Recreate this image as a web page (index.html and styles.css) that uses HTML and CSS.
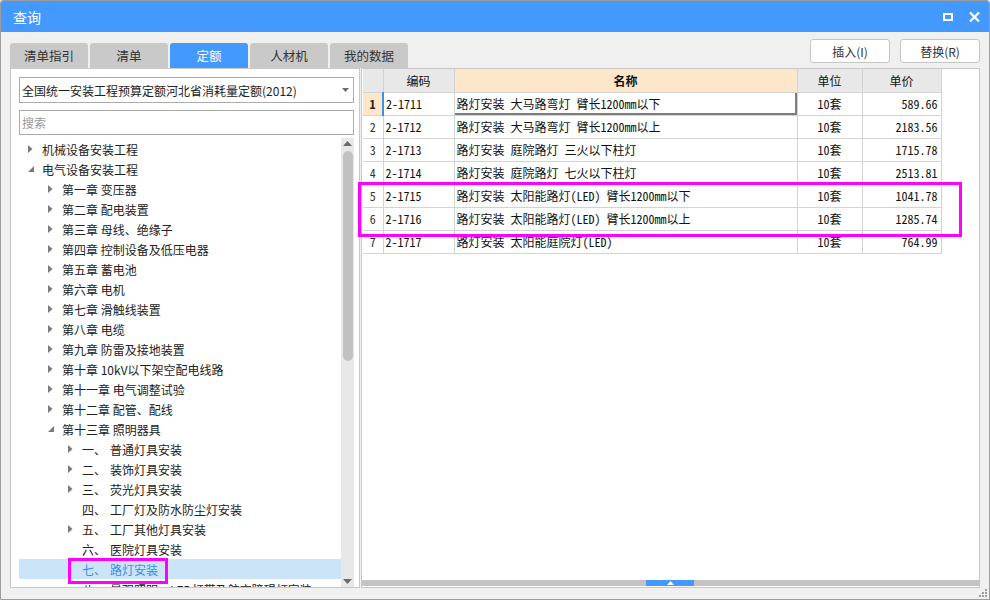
FILE: index.html
```html
<!DOCTYPE html>
<html lang="zh-CN">
<head>
<meta charset="utf-8">
<title>查询</title>
<link rel="stylesheet" href="styles.css">
</head>
<body>
<div class="window">
  <div class="titlebar">
    <span class="title">查询</span>
    <div class="wctl">
      <svg class="ico-max" width="10" height="8" viewBox="0 0 10 8"><rect x="1" y="1" width="8" height="6" fill="none" stroke="#fff" stroke-width="2"/></svg>
      <svg class="ico-close" width="11" height="10" viewBox="0 0 11 10"><path d="M1 0.5L10 9.5M10 0.5L1 9.5" stroke="#fff" stroke-width="2.2"/></svg>
    </div>
  </div>

  <div class="toolbar">
    <div class="tabs">
      <div class="tab">清单指引</div>
      <div class="tab">清单</div>
      <div class="tab active">定额</div>
      <div class="tab">人材机</div>
      <div class="tab">我的数据</div>
    </div>
    <div class="actions">
      <div class="btn">插入(I)</div>
      <div class="btn">替换(R)</div>
    </div>
  </div>

  <div class="panels">
    <div class="left">
      <div class="combo">
        <span>全国统一安装工程预算定额河北省消耗量定额(2012)</span>
        <svg class="combo-arrow" width="7" height="4" viewBox="0 0 7 4"><path d="M0 0H7L3.5 4Z" fill="#6d6d6d"/></svg>
      </div>
      <div class="search">搜索</div>
      <div class="treewrap">
        <div class="tree">
          <div class="node l0"><span class="tw"><svg width="5" height="8" viewBox="0 0 5 8"><path d="M0 0L4.5 4L0 8Z"/></svg></span>机械设备安装工程</div>
          <div class="node l0"><span class="tw"><svg width="6" height="6" viewBox="0 0 6 6"><path d="M6 0V6H0Z"/></svg></span>电气设备安装工程</div>
          <div class="node l1"><span class="tw"><svg width="5" height="8" viewBox="0 0 5 8"><path d="M0 0L4.5 4L0 8Z"/></svg></span>第一章 变压器</div>
          <div class="node l1"><span class="tw"><svg width="5" height="8" viewBox="0 0 5 8"><path d="M0 0L4.5 4L0 8Z"/></svg></span>第二章 配电装置</div>
          <div class="node l1"><span class="tw"><svg width="5" height="8" viewBox="0 0 5 8"><path d="M0 0L4.5 4L0 8Z"/></svg></span>第三章 母线、绝缘子</div>
          <div class="node l1"><span class="tw"><svg width="5" height="8" viewBox="0 0 5 8"><path d="M0 0L4.5 4L0 8Z"/></svg></span>第四章 控制设备及低压电器</div>
          <div class="node l1"><span class="tw"><svg width="5" height="8" viewBox="0 0 5 8"><path d="M0 0L4.5 4L0 8Z"/></svg></span>第五章 蓄电池</div>
          <div class="node l1"><span class="tw"><svg width="5" height="8" viewBox="0 0 5 8"><path d="M0 0L4.5 4L0 8Z"/></svg></span>第六章 电机</div>
          <div class="node l1"><span class="tw"><svg width="5" height="8" viewBox="0 0 5 8"><path d="M0 0L4.5 4L0 8Z"/></svg></span>第七章 滑触线装置</div>
          <div class="node l1"><span class="tw"><svg width="5" height="8" viewBox="0 0 5 8"><path d="M0 0L4.5 4L0 8Z"/></svg></span>第八章 电缆</div>
          <div class="node l1"><span class="tw"><svg width="5" height="8" viewBox="0 0 5 8"><path d="M0 0L4.5 4L0 8Z"/></svg></span>第九章 防雷及接地装置</div>
          <div class="node l1"><span class="tw"><svg width="5" height="8" viewBox="0 0 5 8"><path d="M0 0L4.5 4L0 8Z"/></svg></span>第十章 10kV以下架空配电线路</div>
          <div class="node l1"><span class="tw"><svg width="5" height="8" viewBox="0 0 5 8"><path d="M0 0L4.5 4L0 8Z"/></svg></span>第十一章 电气调整试验</div>
          <div class="node l1"><span class="tw"><svg width="5" height="8" viewBox="0 0 5 8"><path d="M0 0L4.5 4L0 8Z"/></svg></span>第十二章 配管、配线</div>
          <div class="node l1"><span class="tw"><svg width="6" height="6" viewBox="0 0 6 6"><path d="M6 0V6H0Z"/></svg></span>第十三章 照明器具</div>
          <div class="node l2"><span class="tw"><svg width="5" height="8" viewBox="0 0 5 8"><path d="M0 0L4.5 4L0 8Z"/></svg></span><span class="ord">一、</span>普通灯具安装</div>
          <div class="node l2"><span class="tw"><svg width="5" height="8" viewBox="0 0 5 8"><path d="M0 0L4.5 4L0 8Z"/></svg></span><span class="ord">二、</span>装饰灯具安装</div>
          <div class="node l2"><span class="tw"><svg width="5" height="8" viewBox="0 0 5 8"><path d="M0 0L4.5 4L0 8Z"/></svg></span><span class="ord">三、</span>荧光灯具安装</div>
          <div class="node l2"><span class="tw"></span><span class="ord">四、</span>工厂灯及防水防尘灯安装</div>
          <div class="node l2"><span class="tw"><svg width="5" height="8" viewBox="0 0 5 8"><path d="M0 0L4.5 4L0 8Z"/></svg></span><span class="ord">五、</span>工厂其他灯具安装</div>
          <div class="node l2"><span class="tw"></span><span class="ord">六、</span>医院灯具安装</div>
          <div class="node l2 selected"><span class="tw"></span><span class="ord">七、</span>路灯安装</div>
          <div class="node l2"><span class="tw"></span><span class="ord">八、</span>景观照明、LED灯带及航空障碍灯安装</div>
        </div>
        <div class="vscroll">
          <svg width="9" height="5" viewBox="0 0 9 5"><path d="M0 5L4.5 0L9 5Z" fill="#6a6a6a"/></svg>
          <div class="vthumb"></div>
          <div class="vspace"></div>
          <svg width="9" height="5" viewBox="0 0 9 5"><path d="M0 0H9L4.5 5Z" fill="#6a6a6a"/></svg>
        </div>
      </div>
    </div>

    <div class="right">
      <div class="gridarea">
        <table class="grid">
          <colgroup>
            <col class="c-no"><col class="c-code"><col class="c-name"><col class="c-unit"><col class="c-price">
          </colgroup>
          <thead>
            <tr><th></th><th>编码</th><th class="hl">名称</th><th>单位</th><th>单价</th></tr>
          </thead>
          <tbody>
            <tr class="cur"><td class="no">1</td><td class="code">2-1711</td><td class="name">路灯安装 大马路弯灯 臂长1200mm以下</td><td class="unit">10套</td><td class="price">589.66</td></tr>
            <tr><td class="no">2</td><td class="code">2-1712</td><td class="name">路灯安装 大马路弯灯 臂长1200mm以上</td><td class="unit">10套</td><td class="price">2183.56</td></tr>
            <tr><td class="no">3</td><td class="code">2-1713</td><td class="name">路灯安装 庭院路灯 三火以下柱灯</td><td class="unit">10套</td><td class="price">1715.78</td></tr>
            <tr><td class="no">4</td><td class="code">2-1714</td><td class="name">路灯安装 庭院路灯 七火以下柱灯</td><td class="unit">10套</td><td class="price">2513.81</td></tr>
            <tr><td class="no">5</td><td class="code">2-1715</td><td class="name">路灯安装 太阳能路灯(LED) 臂长1200mm以下</td><td class="unit">10套</td><td class="price">1041.78</td></tr>
            <tr><td class="no">6</td><td class="code">2-1716</td><td class="name">路灯安装 太阳能路灯(LED) 臂长1200mm以上</td><td class="unit">10套</td><td class="price">1285.74</td></tr>
            <tr><td class="no">7</td><td class="code">2-1717</td><td class="name">路灯安装 太阳能庭院灯(LED)</td><td class="unit">10套</td><td class="price">764.99</td></tr>
          </tbody>
        </table>
      </div>
      <div class="hscroll">
        <div class="hthumb"><svg width="7" height="4" viewBox="0 0 7 4"><path d="M0 4L3.5 0L7 4Z" fill="#fff"/></svg></div>
      </div>
    </div>
  </div>

  <div class="mark mark-tree"></div>
  <div class="mark mark-grid"></div>
  <svg class="grip" width="8" height="8" viewBox="0 0 8 8"><g fill="#a0a0a0"><rect x="6" y="0" width="2" height="2"/><rect x="3" y="3" width="2" height="2"/><rect x="6" y="3" width="2" height="2"/><rect x="0" y="6" width="2" height="2"/><rect x="3" y="6" width="2" height="2"/><rect x="6" y="6" width="2" height="2"/></g></svg>
</div>
</body>
</html>
```

FILE: styles.css
```css
* { box-sizing: border-box; }

body {
  margin: 0;
  font-family: "Noto Sans CJK SC", "Microsoft YaHei", sans-serif;
  font-size: 12px;
  color: #222;
  background: #fff;
}

.window {
  position: relative;
  width: 990px;
  height: 600px;
  border: 1px solid #9c9c9c;
  border-radius: 3px 3px 0 0;
  background: #f0f0f0;
  display: flex;
  flex-direction: column;
  overflow: hidden;
}

.titlebar {
  height: 31px;
  flex: none;
  background: #4499ff;
  color: #fff;
  display: flex;
  align-items: center;
  padding-left: 12px;
}

.title {
  font-size: 14px;
}

.wctl {
  margin-left: auto;
  display: flex;
  align-items: center;
  gap: 16px;
  padding-right: 9px;
}

.toolbar {
  height: 36px;
  flex: none;
  display: flex;
  padding: 0 9px;
}

.tabs {
  align-self: flex-end;
  display: flex;
  gap: 2px;
}

.tab {
  width: 78px;
  height: 25px;
  display: flex;
  align-items: center;
  justify-content: center;
  background: #c9c9c9;
  border-radius: 3px 3px 0 0;
  color: #333;
  font-size: 12.5px;
}

.tab.active {
  background: #4499ff;
  color: #fff;
}

.actions {
  margin-left: auto;
  margin-top: 7px;
  display: flex;
  gap: 10px;
  align-self: flex-start;
}

.btn {
  width: 80px;
  height: 24px;
  border: 1px solid #c6c6c6;
  border-radius: 3px;
  background: #fff;
  display: flex;
  align-items: center;
  justify-content: center;
  color: #333;
}

.panels {
  height: 520px;
  flex: none;
  display: flex;
  gap: 1px;
  padding: 0 9px;
}

.left {
  width: 350px;
  flex: none;
  border: 1px solid #c8c8c8;
  background: #fff;
  padding: 8px 5px 0 8px;
  display: flex;
  flex-direction: column;
}

.combo {
  height: 26px;
  flex: none;
  border: 1px solid #ababab;
  display: flex;
  align-items: center;
  padding-left: 2px;
  color: #222;
}

.combo-arrow {
  margin-left: auto;
  margin-right: 4px;
}

.search {
  margin-top: 7px;
  height: 25px;
  flex: none;
  border: 1px solid #ababab;
  display: flex;
  align-items: center;
  padding-left: 2px;
  color: #9a9a9a;
}

.treewrap {
  margin-top: 3px;
  flex: 1;
  min-height: 0;
  display: flex;
  overflow: hidden;
}

.tree {
  flex: 1;
  padding-top: 1px;
  overflow: hidden;
}

.node {
  height: 20px;
  display: flex;
  align-items: center;
  white-space: nowrap;
  color: #222;
}

.node.l0 { padding-left: 9px; }
.node.l1 { padding-left: 29px; }
.node.l2 { padding-left: 49px; }

.tw {
  width: 14px;
  flex: none;
  display: flex;
  align-items: center;
}

.tw svg { fill: #7a7a7a; }

.ord {
  width: 28px;
  flex: none;
}

.node.selected {
  background: #cce4f7;
  color: #3a8ee6;
}

.vscroll {
  width: 13px;
  flex: none;
  background: #e8e8e8;
  display: flex;
  flex-direction: column;
  align-items: center;
  padding: 3px 0 3px;
}

.vthumb {
  margin-top: 5px;
  width: 10px;
  height: 210px;
  border-radius: 5px;
  background: #c1c1c1;
}

.vspace { flex: 1; }

.right {
  flex: 1;
  border: 1px solid #c8c8c8;
  background: #fff;
  display: flex;
  flex-direction: column;
}

.gridarea {
  flex: 1;
  min-height: 0;
  padding-left: 1px;
}

.grid {
  border-collapse: collapse;
  table-layout: fixed;
  width: 578px;
  font-family: "Noto Sans Mono CJK SC", "NSimSun", "Liberation Mono", monospace;
  font-size: 12px;
  color: #111;
}

.c-no { width: 20px; }
.c-code { width: 71px; }
.c-name { width: 343px; }
.c-unit { width: 65px; }
.c-price { width: 79px; }

.grid th,
.grid td {
  height: 23px;
  border: 1px solid #d3d3d3;
  padding: 0 2px;
  white-space: nowrap;
  overflow: hidden;
}

.grid thead th {
  border-top: none;
  background: #e8e8e8;
  font-weight: normal;
  font-family: "Noto Sans CJK SC", sans-serif;
  text-align: center;
  height: 23px;
}

.grid thead th.hl {
  background: #fde7cb;
  font-weight: bold;
}

.grid thead th:first-child { border-left: none; }
.grid td.no { border-left: none; text-align: center; padding: 0; color: #333; }
.grid td.unit { text-align: center; }
.grid td.price { text-align: right; padding-right: 3px; }

.grid tr.cur td.no {
  background: #fde7cb;
  font-weight: bold;
  color: #222;
  border-right: 2px solid #3c8ee6;
}

.grid tr.cur td.name {
  border-top: 1px solid #3c8ee6;
  box-shadow: inset -2px -2px 0 #7d7d7d;
}

.hscroll {
  height: 6px;
  flex: none;
  background: #c3c3c3;
  display: flex;
  margin-bottom: 1px;
}

.hthumb {
  margin-left: 284px;
  width: 48px;
  height: 6px;
  background: #4499ff;
  display: flex;
  justify-content: center;
  align-items: center;
}

.mark {
  position: absolute;
  border: 3px solid #ff00ff;
  pointer-events: none;
}

.mark-tree {
  left: 67px;
  top: 557px;
  width: 100px;
  height: 26px;
}

.mark-grid {
  left: 357px;
  top: 181px;
  width: 604px;
  height: 55px;
}

.grip {
  position: absolute;
  right: 2px;
  bottom: 2px;
}
```
